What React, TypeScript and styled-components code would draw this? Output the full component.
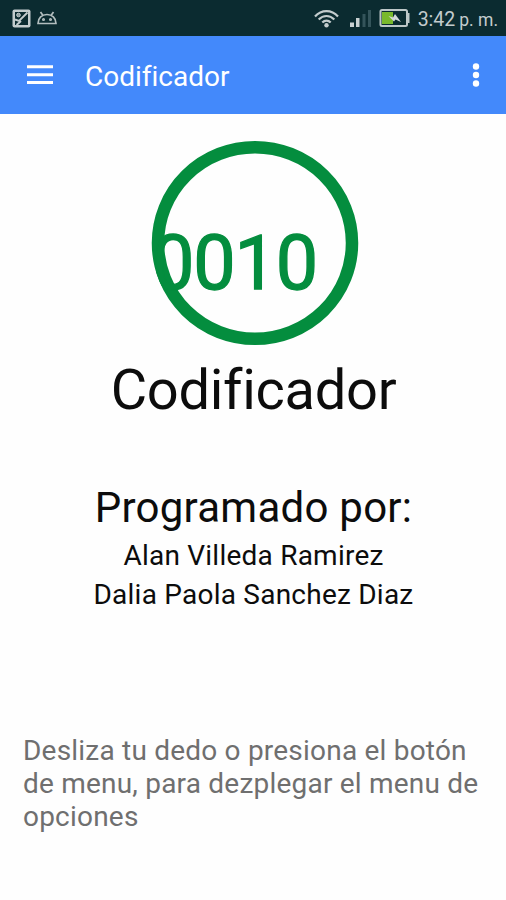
import React from "react";
import styled, { createGlobalStyle } from "styled-components";

const GlobalStyle = createGlobalStyle`
  * { box-sizing: border-box; }
  body {
    margin: 0;
    background: #fefefe;
    font-family: Roboto, "Noto Sans", sans-serif;
    font-variant-ligatures: none;
  }
`;

const Screen = styled.div`
  width: 506px;
  height: 900px;
  display: flex;
  flex-direction: column;
  overflow: hidden;
  background: #fefefe;
`;

const StatusBar = styled.header`
  height: 36px;
  flex: none;
  display: flex;
  align-items: center;
  justify-content: space-between;
  padding: 0 8px 0 12px;
  background: #0b2b30;
  color: #c3cccd;
`;

const StatusGroup = styled.div`
  display: flex;
  align-items: center;
`;

const StatusIcon = styled.svg<{ $gap: number }>`
  display: block;
  flex: none;
  margin-right: ${(p) => p.$gap}px;
`;

const Clock = styled.time`
  font-size: 19.5px;
  line-height: 36px;
  padding-top: 3px;
  white-space: nowrap;
`;

const Meridiem = styled.span`
  font-size: 17.5px;
  margin-left: 4px;
`;

const AppBar = styled.nav`
  height: 78px;
  flex: none;
  display: flex;
  align-items: center;
  padding: 0 15px 0 20px;
  background: #4389fb;
  color: #fff;
`;

const IconButton = styled.button<{ $width: number }>`
  width: ${(p) => p.$width}px;
  height: 40px;
  padding: 0;
  border: 0;
  background: none;
  color: inherit;
  display: flex;
  align-items: center;
  justify-content: center;
`;

const BarTitle = styled.h1`
  flex: 1;
  margin: 0 0 0 25px;
  padding-top: 3px;
  font-size: 28px;
  font-weight: 400;
  line-height: 36px;
`;

const Content = styled.main`
  flex: 1;
  display: flex;
  flex-direction: column;
  align-items: center;
  padding-top: 25px;
  color: #0c0c0c;
`;

const LogoMark = styled.svg`
  display: block;
  flex: none;
  margin-left: 4px;
`;

const LogoDigits = styled.text`
  font: 400 75.5px Roboto, sans-serif;
  letter-spacing: -1.2px;
  fill: #048d3e;
  stroke: #048d3e;
  stroke-width: 1.3px;
`;

const Line = styled.p<{ $size: number; $height: number; $top?: number; $spacing?: number }>`
  margin: ${(p) => p.$top ?? 0}px 0 0;
  padding-left: 1px;
  font-size: ${(p) => p.$size}px;
  line-height: ${(p) => p.$height}px;
  letter-spacing: ${(p) => p.$spacing ?? 0}px;
  white-space: nowrap;
`;

const Hint = styled.p`
  align-self: stretch;
  margin: 120px 20px 0 23px;
  font-size: 28px;
  line-height: 33px;
  letter-spacing: 0.21px;
  color: #6f6f6f;
`;

const Logo = () => (
  <LogoMark width="210" height="208" viewBox="150 139 210 208">
    <defs>
      <clipPath id="disc">
        <ellipse cx="255" cy="243" rx="103" ry="102" />
      </clipPath>
    </defs>
    <ellipse cx="255" cy="243" rx="97" ry="95.8" fill="none" stroke="#048d3e" strokeWidth="12.5" />
    <LogoDigits x="152" y="289.2" clipPath="url(#disc)">
      0010
    </LogoDigits>
  </LogoMark>
);

export default function App() {
  return (
    <Screen>
      <GlobalStyle />
      <StatusBar>
        <StatusGroup>
          <StatusIcon $gap={6} width="19" height="19" viewBox="0 0 19 19">
            <rect x="0.5" y="0.5" width="18" height="18" rx="2" fill="#c3cccd" />
            <rect x="3" y="3" width="13" height="13" fill="#0b2b30" />
            <circle cx="6.500" cy="6" r="1.8" fill="#8d9c9e" stroke="#c3cccd" />
            <path d="M3 10.500l4 1.500 8.500-8.500M4.500 16l4.500-4" fill="none" stroke="#c3cccd" strokeWidth="1.900" />
          </StatusIcon>
          <StatusIcon $gap={0} width="20" height="14" viewBox="0 0 20 14" fill="none" stroke="#b3bebf" strokeWidth="1.700">
            <path d="M1 12.500C1 7 5 3.500 10 3.500s9 3.500 9 9zM3.500 1l2.500 3.500M16.500 1l-2.500 3.500" />
            <circle cx="6.500" cy="8.500" r=".7" />
            <circle cx="13.500" cy="8.500" r=".7" />
          </StatusIcon>
        </StatusGroup>
        <StatusGroup>
          <StatusIcon $gap={10} width="25" height="19" viewBox="0 0 25 19" fill="none" stroke="#c3cccd" strokeWidth="2.200">
            <path d="M1 7.500c6.500-7.300 16.500-7.300 23 0M4.700 10.500c4.500-4.700 11.100-4.700 15.600 0M8.300 13.500c2.500-2.600 5.900-2.600 8.400 0" />
            <circle cx="12.500" cy="16.300" r="2.200" fill="#c3cccd" stroke="none" />
          </StatusIcon>
          <StatusIcon $gap={8} width="22" height="18" viewBox="0 0 22 18">
            <path d="M1 13.500h4V18H1zM7 9h3.500v9H7z" fill="#c9d1d2" />
            <path d="M13.500 5h3v13h-3zM19 1h3v17h-3z" fill="#34545a" />
          </StatusIcon>
          <StatusIcon $gap={8} width="31" height="18" viewBox="0 0 31 18">
            <rect x="1.500" y="1" width="26.500" height="16" rx="1.500" fill="#0b2b30" stroke="#bdc7c8" strokeWidth="2" />
            <path d="M28 4h2.500v10H28z" fill="#bdc7c8" />
            <path d="M3 3h11v12H3z" fill="#79b92c" />
            <path d="M9.500 7l4.500 1.500 2-3.500 6 8-5.500-2.500-1.500 2z" fill="#d4dadb" />
          </StatusIcon>
          <Clock>
            3:42<Meridiem>p. m.</Meridiem>
          </Clock>
        </StatusGroup>
      </StatusBar>
      <AppBar>
        <IconButton $width={40} aria-label="Menu">
          <svg width="28" height="22" viewBox="0 0 28 22" fill="#fff">
            <path d="M1 1.300h26v3H1zM1 9.200h26v3H1zM1 17h26v3H1z" />
          </svg>
        </IconButton>
        <BarTitle>Codificador</BarTitle>
        <IconButton $width={30} aria-label="Opciones">
          <svg width="8" height="26" viewBox="0 0 8 26" fill="#fff">
            <circle cx="4" cy="4.500" r="3.200" />
            <circle cx="4" cy="13" r="3.200" />
            <circle cx="4" cy="21.500" r="3.200" />
          </svg>
        </IconButton>
      </AppBar>
      <Content>
        <Logo />
        <Line $size={56} $height={66} $top={10} $spacing={-0.3}>Codificador</Line>
        <Line $size={42} $height={50} $top={60} $spacing={0.25}>Programado por:</Line>
        <Line $size={28} $height={39} $top={3} $spacing={0.23}>Alan Villeda Ramirez</Line>
        <Line $size={28} $height={39} $spacing={0.23}>Dalia Paola Sanchez Diaz</Line>
        <Hint>Desliza tu dedo o presiona el botón de menu, para dezplegar el menu de opciones</Hint>
      </Content>
    </Screen>
  );
}
